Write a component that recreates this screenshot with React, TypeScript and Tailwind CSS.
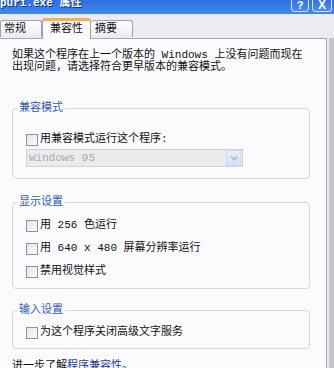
import React from "react";

const FONT = { fontFamily: '"Liberation Mono", "Noto Sans CJK SC", monospace' };

function Check({ label }: { label: string }) {
  return (
    <div className="flex items-center h-[13px] gap-[2px]">
      <div className="w-[12px] h-[12px] border border-[#8596a6] bg-gradient-to-br from-[#e4e4ea] to-[#fcfcfd] shrink-0" />
      <span className="text-[11px] leading-[13px] text-[#111]">{label}</span>
    </div>
  );
}

function Group({ title, children, className }: { title: string; children: React.ReactNode; className?: string }) {
  return (
    <fieldset className={"border border-[#d6d6dc] rounded-[4px] mx-[12px] w-[298px] " + (className ?? "")}>
      <legend className="ml-[4px] px-[2px] text-[11px] leading-[12px] text-[#2a5bc4]">{title}</legend>
      {children}
    </fieldset>
  );
}

export default function App() {
  return (
    <div className="w-[334px] h-[368px] overflow-hidden bg-[#ececf0] flex flex-col" style={FONT}>
      {/* Title bar */}
      <div className="h-[14px] shrink-0 bg-gradient-to-b from-[#2f6fe0] to-[#3d8af3] flex items-start justify-between overflow-hidden">
        <span className="text-white font-bold text-[11px] leading-[11px] -mt-[2px] [text-shadow:1px_1px_0_#0a2f8a] whitespace-nowrap">puri.exe 属性</span>
        <div className="flex gap-[3px] mr-[2px] -mt-[4px]">
          <div className="w-[18px] h-[16px] rounded-[3px] border border-[#dbe6fb] bg-gradient-to-b from-[#2b68e0] to-[#4d8df5] flex items-end justify-center">
            <span className="text-white text-[11px] leading-[12px] font-bold" style={{ fontFamily: '"Liberation Sans", sans-serif' }}>?</span>
          </div>
          <div className="w-[20px] h-[16px] rounded-[3px] border border-[#dbe6fb] bg-gradient-to-b from-[#2b68e0] to-[#4d8df5] flex items-end justify-center">
            <span className="text-white text-[12px] leading-[12px] font-bold" style={{ fontFamily: '"Liberation Sans", sans-serif' }}>X</span>
          </div>
        </div>
      </div>

      {/* Tabs */}
      <div className="h-[24px] shrink-0 flex items-end pt-[4px] relative z-10">
        <div className="w-[42px] h-[17px] border border-b-0 border-[#9aa4b4] rounded-t-[3px] bg-gradient-to-b from-white to-[#ecebf0] pl-[3px] text-[11px] leading-[16px] text-[#111] mb-[1px]">常规</div>
        <div className="w-[49px] h-[21px] border-x border-[#9aa4b4] border-t-[3px] border-t-[#f3b34a] rounded-t-[3px] bg-[#fbfbfd] pl-[7px] text-[11px] leading-[16px] text-[#111] -mb-[1px]">兼容性</div>
        <div className="w-[42px] h-[17px] border border-b-0 border-l-0 border-[#9aa4b4] rounded-t-[3px] bg-gradient-to-b from-white to-[#ecebf0] pl-[4px] text-[11px] leading-[16px] text-[#111] mb-[1px]">摘要</div>
      </div>

      {/* Panel + right frame */}
      <div className="flex flex-1 min-h-0">
        <div className="w-[327px] border-t border-r border-[#a3a9b6] bg-[#fbfbfd] flex flex-col">
          <p className="pt-[10px] px-[12px] text-[11px] leading-[12px] text-[#111]">
            如果这个程序在上一个版本的 Windows 上没有问题而现在
            <br />
            出现问题，请选择符合更早版本的兼容模式。
          </p>

          <Group title="兼容模式" className="mt-[29px] h-[77px] shrink-0">
            <div className="pl-[13px] pt-[19px] flex flex-col gap-[3px]">
              <Check label="用兼容模式运行这个程序:" />
              <div className="w-[217px] h-[18px] border border-[#cfd0d4] bg-[#ebebee] flex items-center justify-between">
                <span className="pl-[2px] text-[11px] leading-[14px] text-[#a9a9b0]" style={{ fontFamily: '"Liberation Mono", monospace' }}>Windows 95</span>
                <div className="w-[15px] h-[16px] mr-[1px] border border-[#cfdbf5] bg-gradient-to-b from-[#e7eefc] to-[#d2dff7] flex items-center justify-center">
                  <svg width="8" height="6" viewBox="0 0 8 6">
                    <path d="M1 1.5 L4 4.5 L7 1.5" stroke="#a6b6d4" strokeWidth="1.6" fill="none" />
                  </svg>
                </div>
              </div>
            </div>
          </Group>

          <Group title="显示设置" className="mt-[17px] h-[93px] shrink-0">
            <div className="pl-[13px] pt-[11px] flex flex-col gap-[10px]">
              <Check label="用 256 色运行" />
              <Check label="用 640 x 480 屏幕分辨率运行" />
              <Check label="禁用视觉样式" />
            </div>
          </Group>

          <Group title="输入设置" className="mt-[15px] h-[45px] shrink-0">
            <div className="pl-[13px] pt-[10px]">
              <Check label="为这个程序关闭高级文字服务" />
            </div>
          </Group>

          <p className="pt-[11px] px-[12px] text-[11px] leading-[12px] text-[#111] whitespace-nowrap">
            进一步了解<span className="text-[#1a3fa8]">程序兼容性</span>。
          </p>
        </div>
        <div className="w-[2px] bg-[#ececf0]" />
        <div className="flex-1 bg-[#c4c6ce]" />
      </div>
    </div>
  );
}
